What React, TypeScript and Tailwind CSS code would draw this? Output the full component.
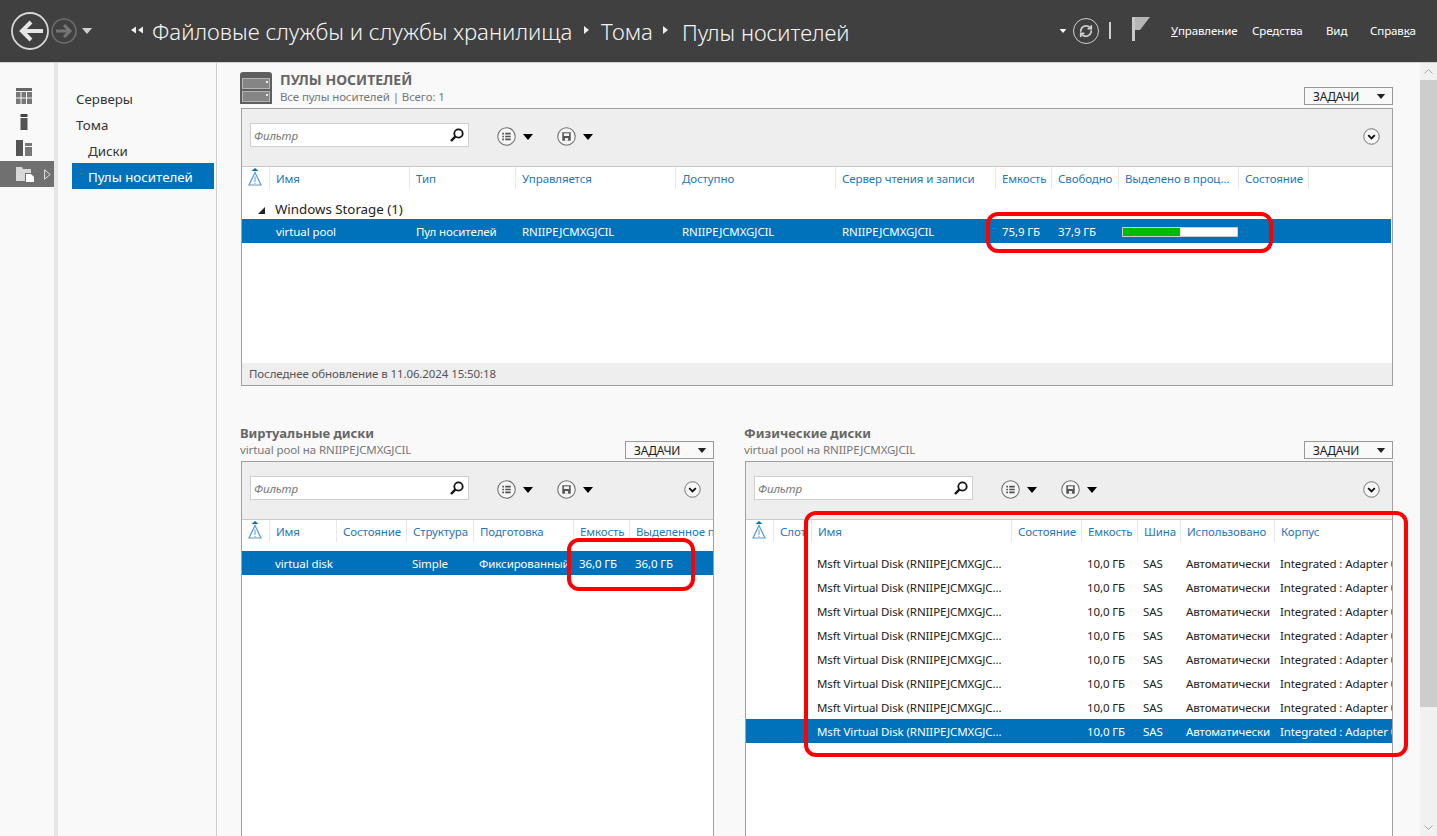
import { RefreshCw } from 'lucide-react';
import type React from 'react';

const Triangle = ({ className }: { className: string }) => (
  <svg viewBox="0 0 10 6" className={className}>
    <path d="M0 0h10L5 6z" fill="currentColor" />
  </svg>
);

const StorageIcon = () => (
  <svg viewBox="0 0 32 32" className="h-8 w-8 shrink-0">
    <path d="M3 0h26a3 3 0 0 1 3 3v29H0V3a3 3 0 0 1 3-3z" fill="#5f5f5f" />
    <rect x="2.5" y="6.5" width="27" height="10" fill="#858585" stroke="#b5b5b5" />
    <rect x="2.5" y="19.5" width="27" height="10" fill="#858585" stroke="#b5b5b5" />
    <rect x="26" y="9" width="2" height="2" fill="#eee" />
    <rect x="26" y="22" width="2" height="2" fill="#eee" />
  </svg>
);

const SearchIcon = () => (
  <svg viewBox="0 0 16 16" className="h-4 w-4">
    <circle cx="9.5" cy="6.5" r="4.2" fill="none" stroke="#111" strokeWidth="1.8" />
    <path d="M6.3 9.7 2 14" stroke="#111" strokeWidth="2.4" />
  </svg>
);

const ListButton = () => (
  <div className="flex items-center gap-[7px]">
    <svg viewBox="0 0 18 18" className="h-[19px] w-[19px]">
      <circle cx="9" cy="9" r="8.3" fill="#f6f6f6" stroke="#6e6e6e" strokeWidth="1" />
      <path d="M5 5.500h1.600v1.600H5zM5 8.200h1.600v1.600H5zM5 10.900h1.600v1.600H5zM7.800 5.500H13v1.600H7.800zM7.800 8.200H13v1.600H7.800zM7.800 10.900H13v1.600H7.800z" fill="#555" />
    </svg>
    <Triangle className="h-[6px] w-[10px] text-black" />
  </div>
);

const SaveButton = () => (
  <div className="flex items-center gap-[7px]">
    <svg viewBox="0 0 18 18" className="h-[19px] w-[19px]">
      <circle cx="9" cy="9" r="8.3" fill="#f6f6f6" stroke="#6e6e6e" strokeWidth="1" />
      <path d="M5 5h8v8H5z" fill="#555" />
      <path d="M6.500 6h5v2.500h-5z" fill="#f6f6f6" />
      <path d="M7.500 10.500h3V13h-3z" fill="#f6f6f6" />
    </svg>
    <Triangle className="h-[6px] w-[10px] text-black" />
  </div>
);

const ExpandButton = () => (
  <svg viewBox="0 0 18 18" className="h-[17px] w-[17px]">
    <circle cx="9" cy="9" r="8.2" fill="#f6f6f6" stroke="#6e6e6e" strokeWidth="1" />
    <path d="M5.500 7.500 9 11l3.500-3.500" fill="none" stroke="#111" strokeWidth="2" />
  </svg>
);

const AlertIcon = () => (
  <svg viewBox="0 0 14 20" className="h-5 w-[14px]">
    <path d="M3.500 4 7 1l3.500 3z" fill="#0072bc" />
    <path d="M7 5.500 13 18H1z" fill="none" stroke="#5a9bd0" strokeWidth="1.2" />
    <path d="M7 9.500V15M7 16v1" stroke="#5a9bd0" strokeWidth="1" />
  </svg>
);

const TasksButton = () => (
  <div className="flex h-[18px] w-[89px] items-center justify-between border border-[#999] bg-[#f9f9f9] pl-2 pr-[6px] text-[12px] leading-none text-[#222]">
    <span className="pt-px tracking-[-0.2px]">ЗАДАЧИ</span>
    <Triangle className="h-[5px] w-[10px] text-[#222]" />
  </div>
);

const Toolbar = () => (
  <div className="flex h-[58px] shrink-0 border-b border-[#c8c8c8] bg-[#eeeeee] pl-2 pr-3 pt-[14px]">
    <div className="flex h-6 w-[219px] items-center justify-between border border-[#cfcfcf] bg-white pl-[3px] pr-[3px]">
      <span className="pt-px text-[11.5px] italic tracking-[-0.1px] text-[#777]">Фильтр</span>
      <SearchIcon />
    </div>
    <div className="ml-7 mt-1 flex h-[19px] items-center gap-6">
      <ListButton />
      <SaveButton />
    </div>
    <div className="ml-auto mt-[5px]">
      <ExpandButton />
    </div>
  </div>
);

const HeaderRow = ({ grid, columns }: { grid: string; columns: string[] }) => (
  <div className={`grid h-[31px] shrink-0 ${grid}`}>
    <div className="flex h-[22px] items-start justify-center border-r border-[#e8e8e8] pr-px">
      <AlertIcon />
    </div>
    {columns.map((label) => (
      <div key={label} className="h-[22px] overflow-hidden whitespace-nowrap border-r border-[#e8e8e8] pl-[6px] pt-[4px] text-[11.5px] leading-4 tracking-[-0.1px] text-[#1f77bd]">
        {label}
      </div>
    ))}
  </div>
);

const Row = ({ grid, cells, selected, pad = 'pl-[5px]' }: { grid: string; cells: React.ReactNode[]; selected?: boolean; pad?: string }) => (
  <div className={`grid h-6 shrink-0 items-center pt-px text-[11.5px] tracking-[-0.1px] ${grid} ${selected ? 'bg-[#0072bc] text-white' : 'text-[#222]'}`}>
    <div />
    {cells.map((cell, i) => (
      <div key={i} className={`overflow-hidden whitespace-nowrap ${pad}`}>
        {cell}
      </div>
    ))}
  </div>
);

const MenuItem = ({ children, className }: { children: React.ReactNode; className: string }) => (
  <span className={`text-[11.5px] tracking-[-0.1px] text-white ${className}`}>{children}</span>
);

const TopBar = () => (
  <header className="flex h-[63px] shrink-0 items-center border-b border-[#d0d0d0] bg-[#404040] pb-[1px] pl-[11px]">
    <svg viewBox="0 0 38 38" className="h-[38px] w-[38px]">
      <circle cx="19" cy="19" r="18" fill="none" stroke="#d6d6d6" strokeWidth="1.8" />
      <path d="M32 19H13M20 10l-9 9 9 9" fill="none" stroke="#e6e6e6" strokeWidth="4" />
    </svg>
    <svg viewBox="0 0 26 26" className="ml-[2px] h-[26px] w-[26px]">
      <circle cx="13" cy="13" r="12" fill="none" stroke="#6e6e6e" strokeWidth="1.6" />
      <path d="M5 13h13M13 7l6 6-6 6" fill="none" stroke="#757575" strokeWidth="3" />
    </svg>
    <Triangle className="ml-[5px] h-[6px] w-[10px] text-[#cfcfcf]" />
    <div className="ml-[39px] flex items-center">
      <svg viewBox="0 0 13 7" className="mr-[8px] h-[8px] w-[13px]">
        <path d="M5 0v7L0 3.500zM12 0v7L7 3.500z" fill="#eee" />
      </svg>
      <span className="w-[420px] whitespace-nowrap pt-1 text-[22.2px] font-light leading-none text-[#f4f4f4]">Файловые службы и службы хранилища</span>
      <svg viewBox="0 0 5 8" className="ml-[12px] h-2 w-[5px]">
        <path d="M0 0v8l5-4z" fill="#eee" />
      </svg>
      <span className="ml-[12px] w-[53px] whitespace-nowrap pt-1 text-[22.2px] font-light leading-none text-[#f4f4f4]">Тома</span>
      <svg viewBox="0 0 5 8" className="ml-[9px] h-2 w-[5px]">
        <path d="M0 0v8l5-4z" fill="#eee" />
      </svg>
      <span className="ml-[14px] whitespace-nowrap pt-1 text-[22px] font-light leading-none text-[#f4f4f4]">Пулы носителей</span>
    </div>
    <div className="ml-auto flex items-center pr-[21px]">
      <Triangle className="h-[4px] w-[8px] text-white" />
      <div className="ml-[6px] flex h-[26px] w-[26px] items-center justify-center rounded-full border-[1.5px] border-[#cfcfcf]">
        <RefreshCw size={14} strokeWidth={3} className="text-[#cfcfcf]" />
      </div>
      <div className="ml-[10px] h-[17px] w-[2px] bg-[#cfcfcf]" />
      <svg viewBox="0 0 18 24" className="ml-[21px] mb-[3px] h-6 w-[18px]">
        <path d="M0 0h3v24H0z" fill="#c9c9c9" />
        <path d="M3 0h15L8 13H3z" fill="#b5b5b5" />
      </svg>
      <div className="ml-[21px] flex items-center">
        <MenuItem className="w-[81px]"><u>У</u>правление</MenuItem>
        <MenuItem className="w-[74px]">Сре<u>д</u>ства</MenuItem>
        <MenuItem className="w-[44px]">Ви<u>д</u></MenuItem>
        <MenuItem className="w-[46px]">Справ<u>к</u>а</MenuItem>
      </div>
    </div>
  </header>
);

const Rail = () => (
  <aside className="flex w-[58px] shrink-0 flex-col border-r-4 border-[#e6e6e6] pt-[25px]">
    <div className="flex flex-col gap-[10px] pl-4">
      <svg viewBox="0 0 16 16" className="h-4 w-4">
        <path d="M0 0h16v3H0z" fill="#666" />
        <path d="M0 4h4.500v5.500H0zM5.500 4h4.500v5.500H5.500zM11 4h5v5.500h-5zM0 10.500h4.500V16H0zM5.500 10.500h4.500V16H5.500zM11 10.500h5V16h-5z" fill="#777" />
      </svg>
      <svg viewBox="0 0 16 16" className="h-4 w-4">
        <path d="M4.500 0h7v3h-7z" fill="#444" />
        <path d="M4.500 4h7v12h-7z" fill="#555" />
      </svg>
      <svg viewBox="0 0 16 16" className="h-4 w-4">
        <path d="M0 0h7v16H0z" fill="#555" />
        <path d="M9 3h7v3H9zM9 7h7v9H9z" fill="#777" />
      </svg>
    </div>
    <div className="mt-[5px] flex h-[26px] items-center bg-[#707070] pl-4">
      <svg viewBox="0 0 18 16" className="h-4 w-[18px]">
        <path d="M0 1h6l1 2h8v4H9v8H0z" fill="#d8d8d8" />
        <path d="M10 8h5l3 3v5h-8z" fill="#fff" />
      </svg>
      <svg viewBox="0 0 7 11" className="ml-[10px] h-[11px] w-[7px]">
        <path d="M.6.800v9.400L6.200 5.500z" fill="none" stroke="#e6e6e6" />
      </svg>
    </div>
  </aside>
);

const Nav = () => (
  <nav className="flex w-[159px] shrink-0 flex-col border-r border-[#cfcfcf] pl-[14px] pr-[2px] pt-[23px] text-[13.3px] text-[#333]">
    <div className="flex h-[26px] items-center pl-1 pt-px">Серверы</div>
    <div className="flex h-[26px] items-center pl-1 pt-px">Тома</div>
    <div className="flex h-[25px] items-center pl-4 pt-[3px]">Диски</div>
    <div className="flex h-[26px] items-center bg-[#0072bc] pl-4 pt-[3px] text-white">Пулы носителей</div>
  </nav>
);

const poolGrid = 'grid-cols-[28px_140px_106px_160px_160px_160px_56px_67px_120px_70px]';
const poolColumns = ['Имя', 'Тип', 'Управляется', 'Доступно', 'Сервер чтения и записи', 'Емкость', 'Свободно', 'Выделено в проц...', 'Состояние'];

const PoolsSection = () => (
  <section className="flex h-[323px] shrink-0 flex-col">
    <div className="flex h-[45px] shrink-0 items-end pb-[3px]">
      <div className="-ml-px mb-px">
        <StorageIcon />
      </div>
      <div className="ml-2 flex-1">
        <div className="mb-px text-[14px] font-bold leading-4 text-[#666]">ПУЛЫ НОСИТЕЛЕЙ</div>
        <div className="text-[11.5px] leading-4 tracking-[-0.1px] text-[#777]">Все пулы носителей | Всего: 1</div>
      </div>
      <TasksButton />
    </div>
    <div className="flex h-[278px] shrink-0 flex-col overflow-hidden border border-[#a0a0a0] bg-white">
      <Toolbar />
      <HeaderRow grid={poolGrid} columns={poolColumns} />
      <div className="flex flex-1 flex-col pl-px pr-px">
        <div className="flex h-[21px] items-center pl-[15px] pt-[3px] text-[13.3px] text-[#222]">
          <svg viewBox="0 0 7 7" className="mr-[10px] h-[7px] w-[7px]">
            <path d="M7 0v7H0z" fill="#222" />
          </svg>
          Windows Storage (1)
        </div>
        <div className="-ml-px">
          <Row
            grid={poolGrid}
            selected
            pad="pl-[6px]"
            cells={[
              'virtual pool',
              'Пул носителей',
              'RNIIPEJCMXGJCIL',
              'RNIIPEJCMXGJCIL',
              'RNIIPEJCMXGJCIL',
              '75,9 ГБ',
              '37,9 ГБ',
              <div key="bar" className="-ml-[3px] flex h-[10px] w-[116px] border border-[#ccc] bg-white">
                <div className="w-[57px] bg-[#00bb00]" />
              </div>,
              '',
            ]}
          />
        </div>
      </div>
      <div className="flex h-[22px] shrink-0 items-center bg-[#eeeeee] pl-[7px] text-[11.5px] tracking-[-0.1px] text-[#555]">Последнее обновление в 11.06.2024 15:50:18</div>
    </div>
  </section>
);

const SectionHead = ({ title }: { title: string }) => (
  <div className="flex h-[36px] shrink-0 items-end pb-[3px]">
    <div className="-ml-px flex-1">
      <div className="mb-px text-[13px] font-bold leading-4 text-[#666]">{title}</div>
      <div className="text-[11.5px] leading-4 tracking-[-0.1px] text-[#777]">virtual pool на RNIIPEJCMXGJCIL</div>
    </div>
    <div className="-mb-px">
      <TasksButton />
    </div>
  </div>
);

const vdiskGrid = 'grid-cols-[28px_67px_70px_67px_100px_56px_100px]';
const diskGrid = 'grid-cols-[28px_38px_200px_70px_56px_43px_94px_200px]';
const diskRows = [0, 1, 2, 3, 4, 5, 6, 7];

const VirtualDisks = () => (
  <section className="flex w-[473px] shrink-0 flex-col">
    <SectionHead title="Виртуальные диски" />
    <div className="flex flex-1 flex-col overflow-hidden border border-b-0 border-[#a0a0a0] bg-white">
      <Toolbar />
      <HeaderRow grid={vdiskGrid} columns={['Имя', 'Состояние', 'Структура', 'Подготовка', 'Емкость', 'Выделенное пространство']} />
      <Row grid={vdiskGrid} selected cells={['virtual disk', '', 'Simple', 'Фиксированный', '36,0 ГБ', '36,0 ГБ']} />
    </div>
  </section>
);

const PhysicalDisks = () => (
  <section className="flex w-[648px] shrink-0 flex-col">
    <SectionHead title="Физические диски" />
    <div className="flex flex-1 flex-col overflow-hidden border border-b-0 border-[#a0a0a0] bg-white">
      <Toolbar />
      <HeaderRow grid={diskGrid} columns={['Слот', 'Имя', 'Состояние', 'Емкость', 'Шина', 'Использовано', 'Корпус']} />
      {diskRows.map((i) => (
        <Row
          key={i}
          grid={diskGrid}
          selected={i === 7}
          cells={['', 'Msft Virtual Disk (RNIIPEJCMXGJC...', '', '10,0 ГБ', 'SAS', 'Автоматически', 'Integrated : Adapter 0 : Port 0']}
        />
      ))}
    </div>
  </section>
);

const Scrollbar = () => (
  <div className="flex w-[17px] shrink-0 flex-col items-center bg-[#f1f1f1]">
    <svg viewBox="0 0 9 5" className="mt-[6px] h-[5px] w-[9px]">
      <path d="M.5 4.500 4.500.5l4 4" fill="none" stroke="#a6a6a6" />
    </svg>
    <div className="mt-[6px] h-[627px] w-full bg-[#cdcdcd]" />
    <svg viewBox="0 0 9 5" className="mt-auto mb-[6px] h-[5px] w-[9px]">
      <path d="M.5.500l4 4 4-4" fill="none" stroke="#a6a6a6" />
    </svg>
  </div>
);

export default function App() {
  return (
    <div className="relative flex h-[836px] w-[1437px] flex-col overflow-hidden bg-[#f9f9f9] font-['Noto_Sans',sans-serif]">
      <TopBar />
      <div className="flex min-h-0 flex-1">
        <Rail />
        <Nav />
        <main className="flex min-w-0 flex-1 flex-col pl-6 pr-[27px]">
          <PoolsSection />
          <div className="flex min-h-0 flex-1 gap-[31px] pt-[39px]">
            <VirtualDisks />
            <PhysicalDisks />
          </div>
        </main>
        <Scrollbar />
      </div>

      {/* Red annotations drawn over the screenshot */}
      <div className="absolute left-[986px] top-[212px] h-[41px] w-[287px] rounded-[12px] border-[4px] border-[#fe0000]" />
      <div className="absolute left-[567px] top-[538px] h-[53px] w-[128px] rounded-[12px] border-[4px] border-[#fe0000]" />
      <div className="absolute left-[804px] top-[511px] h-[246px] w-[604px] rounded-[12px] border-[4px] border-[#fe0000]" />
    </div>
  );
}
